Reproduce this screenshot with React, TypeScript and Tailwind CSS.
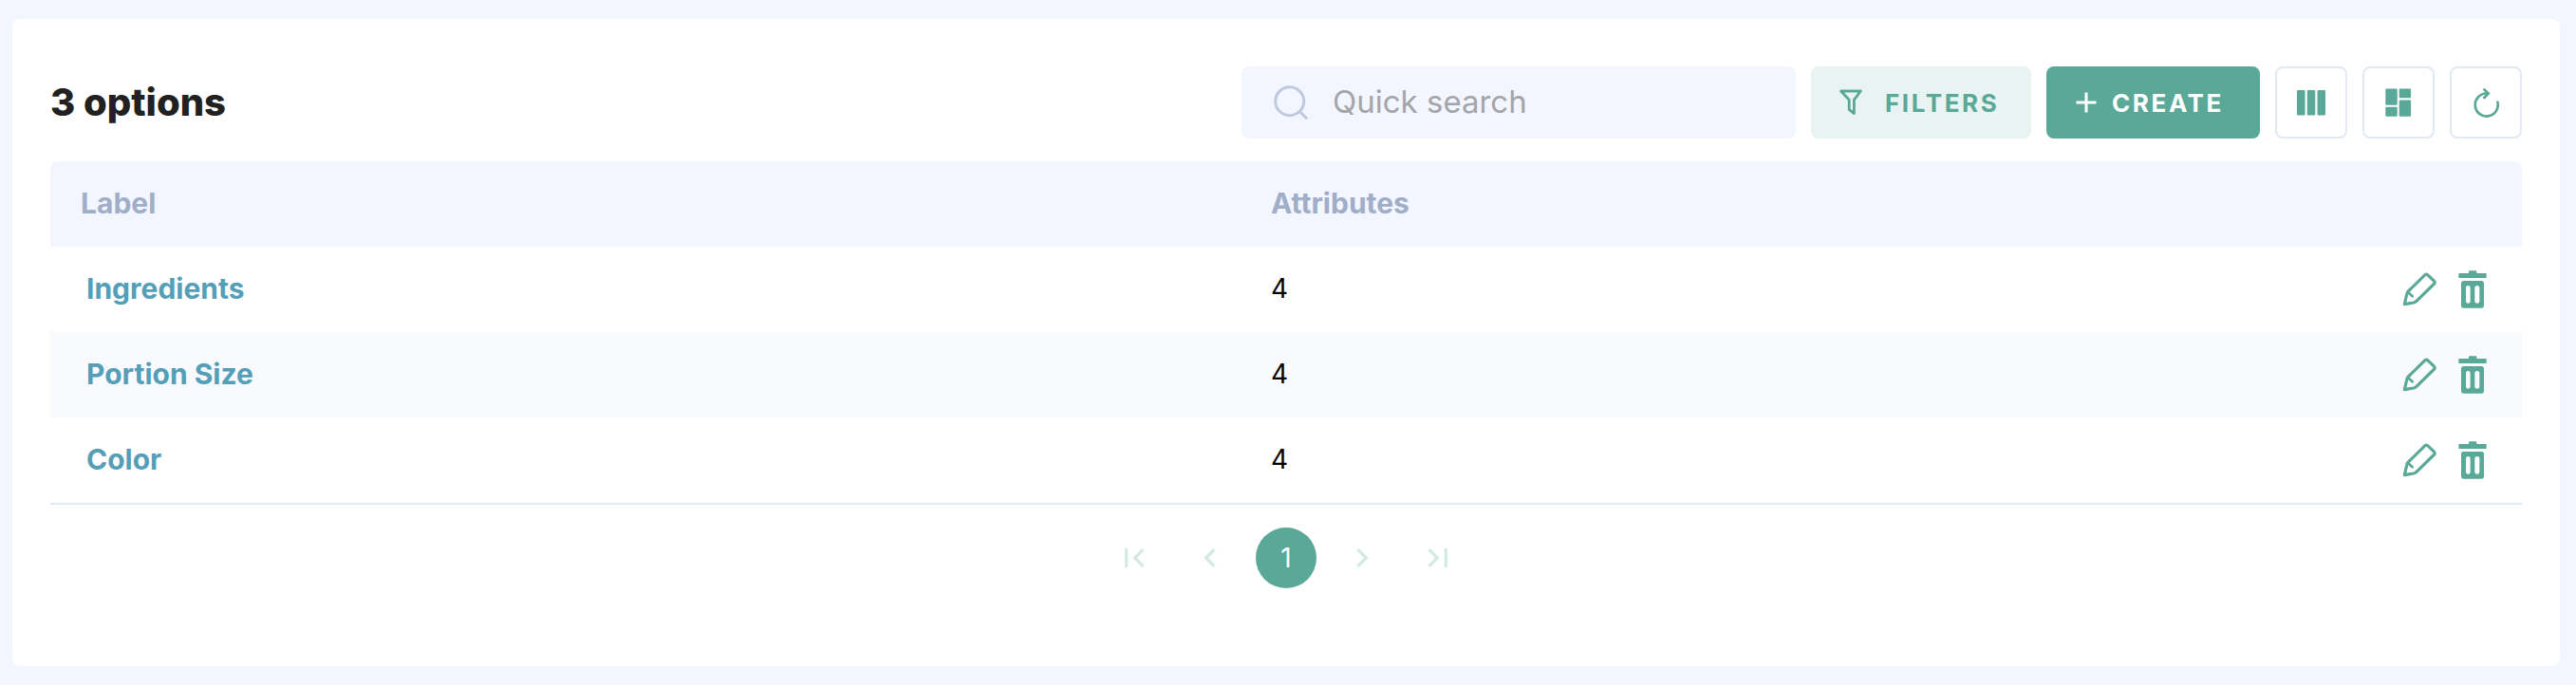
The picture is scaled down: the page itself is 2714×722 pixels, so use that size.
import React from 'react';

interface Option {
  id: number;
  label: string;
  attributes: number;
}

const options: Option[] = [
  { id: 1, label: 'Ingredients', attributes: 4 },
  { id: 2, label: 'Portion Size', attributes: 4 },
  { id: 3, label: 'Color', attributes: 4 },
];

const SearchIcon = () => (
  <svg className="w-9 h-9 shrink-0" viewBox="0 0 36 36" fill="none" stroke="#bfcae0" strokeWidth="3" strokeLinecap="round">
    <circle cx="16.7" cy="16.7" r="15" />
    <path d="M28 28.2l6.2 6.2" />
  </svg>
);

const FilterIcon = () => (
  <svg className="w-6 h-7" viewBox="0 0 24 28" fill="none" stroke="currentColor" strokeWidth="2.8" strokeLinejoin="round">
    <path d="M1.6 2h20.8l-7 9.2v14.4l-5.2-4.2V11.2z" />
  </svg>
);

const PlusIcon = () => (
  <svg className="w-[22px] h-[22px]" viewBox="0 0 22 22" stroke="currentColor" strokeWidth="3">
    <path d="M11 0.5v21M0.5 11h21" />
  </svg>
);

const ColumnsIcon = () => (
  <svg className="w-[30px] h-[30px]" viewBox="0 0 30 30" fill="currentColor">
    <rect x="0" y="2" width="8.5" height="26.5" rx="1" />
    <rect x="10.8" y="2" width="8.5" height="26.5" rx="1" />
    <rect x="21.5" y="2" width="8.5" height="26.5" rx="1" />
  </svg>
);

const DashboardIcon = () => (
  <svg className="w-[30px] h-[30px]" viewBox="0 0 30 30" fill="currentColor">
    <rect x="1.3" y="0.5" width="12.4" height="17.3" rx="1" />
    <rect x="1.3" y="19.8" width="12.4" height="9.9" rx="1" />
    <rect x="15.7" y="0.5" width="12.4" height="9.7" rx="1" />
    <rect x="15.7" y="12.5" width="12.4" height="17.2" rx="1" />
  </svg>
);

const RefreshIcon = () => (
  <svg className="w-8 h-8" viewBox="0 0 32 32" fill="none" stroke="currentColor" strokeWidth="2.7">
    <path d="M28.1 14.6a12 12 0 1 1-11.6-8.1h1.6" />
    <path d="M13.6 1.6l5.1 5-5.1 5.1" />
  </svg>
);

const PencilIcon = () => (
  <svg className="w-10 h-10" viewBox="-3 0 120 120" fill="none" stroke="currentColor" strokeWidth="9.5" strokeLinecap="round" strokeLinejoin="round">
    <path d="M10 107L17 76Q18 71 22 66L75 14Q79 10.500 83 14L104 34Q107 38 104 42L47 98Q44 101 39 102Z" />
    <path d="M20 68L35 82" strokeWidth="8" />
  </svg>
);

const TrashIcon = () => (
  <svg className="w-10 h-10" viewBox="0 0 120 120" fill="currentColor">
    <path d="M16 11q0-2 2-2h30V4q0-3 3-3h19q3 0 3 3v5h29q2 0 2 2v11q0 2-2 2H18q-2 0-2-2z" />
    <path
      fillRule="evenodd"
      d="M32 33h56q8 0 8 8v70q0 8-8 8H32q-8 0-8-8V41q0-8 8-8zM46 48q-7 0-7 8v40q0 8 7 8t7-8V56q0-8-7-8zM74.500 48q-7.500 0-7.500 8v40q0 8 7.500 8t7.500-8V56q0-8-7.500-8z"
    />
  </svg>
);

interface IconButtonProps {
  label: string;
  children: React.ReactNode;
}

const IconButton: React.FC<IconButtonProps> = ({ label, children }) => (
  <button
    aria-label={label}
    className="flex items-center justify-center w-[76px] h-[76px] shrink-0 rounded-lg border-2 border-[#e2e8f4] text-[#5aa897]"
  >
    {children}
  </button>
);

interface PageButtonProps {
  label: string;
  path: string;
}

const PageButton: React.FC<PageButtonProps> = ({ label, path }) => (
  <button aria-label={label} disabled className="flex items-center justify-center w-16 h-16 text-[#d3e9e3]">
    <svg className="w-10 h-10" viewBox="0 0 24 24" fill="currentColor">
      <path d={path} />
    </svg>
  </button>
);

const Toolbar: React.FC<{ count: number }> = ({ count }) => (
  <div className="flex items-center gap-4">
    <h1 className="mr-auto text-[40px] leading-[48px] font-extrabold text-[#212121]">{count} options</h1>
    <label className="flex items-center gap-[26px] w-[584px] h-[76px] pl-[34px] pr-6 rounded-lg bg-[#f3f6ff]">
      <SearchIcon />
      <input
        type="text"
        aria-label="Quick search"
        placeholder="Quick search"
        className="w-full min-w-0 bg-transparent text-[33px] text-[#212121] placeholder:text-[#a3a5a9] outline-none"
      />
    </label>
    <button className="flex items-center gap-6 w-[232px] h-[76px] pl-[30px] shrink-0 rounded-lg bg-[#e9f4f2] text-[26px] font-bold tracking-widest text-[#5aa897]">
      <FilterIcon />
      FILTERS
    </button>
    <button className="flex items-center gap-4 w-[225px] h-[76px] pl-[31px] shrink-0 rounded-lg bg-[#5aa897] text-[26px] font-bold tracking-widest text-white">
      <PlusIcon />
      CREATE
    </button>
    <IconButton label="Columns">
      <ColumnsIcon />
    </IconButton>
    <IconButton label="Layout">
      <DashboardIcon />
    </IconButton>
    <IconButton label="Refresh">
      <RefreshIcon />
    </IconButton>
  </div>
);

const OptionsTable: React.FC<{ rows: Option[] }> = ({ rows }) => (
  <div className="mt-6 overflow-hidden rounded-t-lg border-b-2 border-[#e2e8f4]">
    <table className="w-full table-fixed text-left text-[30px] leading-[42px]">
      <thead className="bg-[#f3f6ff] text-[#a0aec8]">
        <tr className="h-[90px]">
          <th className="w-[48%] pl-8 pb-0.5 font-bold">Label</th>
          <th className="pl-9 pb-0.5 font-bold">Attributes</th>
          <th className="w-48" aria-label="Actions"></th>
        </tr>
      </thead>
      <tbody>
        {rows.map((row) => (
          <tr key={row.id} className="h-[90px] even:bg-[#f9fafe]">
            <td className="pl-[38px] pb-0.5">
              <a href="#" className="font-bold text-[#549fb7]">{row.label}</a>
            </td>
            <td className="pl-9 pb-0.5 text-[28px] text-black">{row.attributes}</td>
            <td className="pr-8">
              <div className="flex items-center justify-end gap-4 text-[#5aa897]">
                <button aria-label={`Edit ${row.label}`}>
                  <PencilIcon />
                </button>
                <button aria-label={`Delete ${row.label}`}>
                  <TrashIcon />
                </button>
              </div>
            </td>
          </tr>
        ))}
      </tbody>
    </table>
  </div>
);

const Pagination = () => (
  <nav aria-label="Pagination" className="flex items-center justify-center gap-4 mt-6">
    <PageButton label="First page" path="M18.41 16.59L13.82 12l4.59-4.59L17 6l-6 6 6 6zM6 6h2v12H6z" />
    <PageButton label="Previous page" path="M15.41 7.41L14 6l-6 6 6 6 1.41-1.41L10.83 12z" />
    <button aria-current="page" className="w-16 h-16 rounded-full bg-[#5aa897] text-[28px] text-white">
      1
    </button>
    <PageButton label="Next page" path="M10 6L8.590 7.410 13.170 12l-4.580 4.590L10 18l6-6z" />
    <PageButton label="Last page" path="M5.590 7.410L10.180 12l-4.590 4.590L7 18l6-6-6-6zM16 6h2v12h-2z" />
  </nav>
);

const App: React.FC = () => {
  return (
    <div className="min-h-screen bg-[#f3f6ff] py-5 pl-[13px] pr-[17px] font-['Inter',sans-serif]">
      <main className="rounded-lg bg-white px-10 pt-[50px] pb-[82px]">
        <Toolbar count={options.length} />
        <OptionsTable rows={options} />
        <Pagination />
      </main>
    </div>
  );
};

export default App;
